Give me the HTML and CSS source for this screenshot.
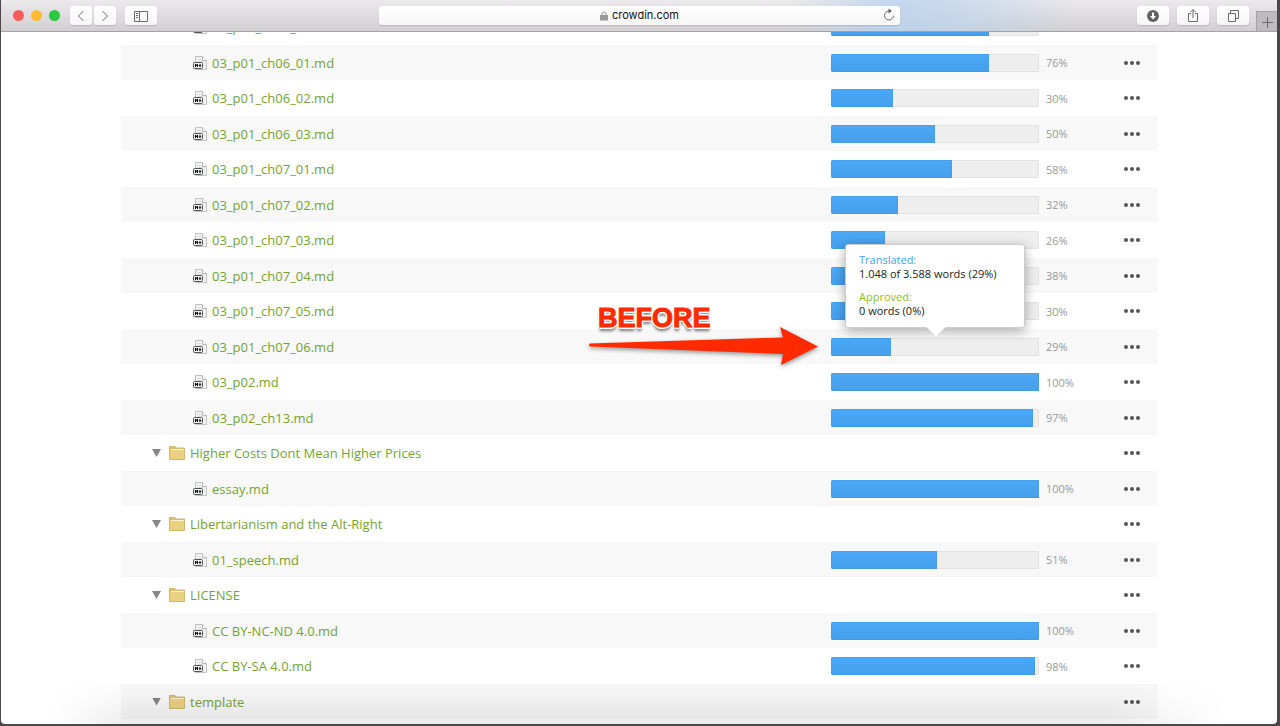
FILE: index.html
```html
<!DOCTYPE html>
<html lang="en">
<head>
<meta charset="utf-8">
<title>crowdin.com</title>
<link rel="stylesheet" href="styles.css">
</head>
<body>
<svg class="defs" aria-hidden="true">
  <symbol id="file" viewBox="0 0 14 14">
    <path d="M2.500.5h7l4 4v9h-11z" fill="#f1f2f1" stroke="#bfc3c1"/>
    <path d="M9.500.5v4h4" fill="#fff" stroke="#b5b9b7"/>
    <path d="M4 3.500h4M4 5.500h7" stroke="#dcdedd"/>
    <rect x=".5" y="6.500" width="9" height="6" rx="1" fill="#eee" stroke="#555"/>
    <path d="M2 8h1l.5 1 .5-1h1v3H4v-1H3v1H2zM6.500 8h1v1.300h1L7 11.200 5.500 9.300h1z" fill="#111"/>
  </symbol>
  <symbol id="folder" viewBox="0 0 16 14">
    <path d="M.5 13.500V.5h5.500l1 1.500h8.500v11.500z" fill="#dcc074" stroke="#d0b670"/>
    <path d="M2 3h12.500v1H2z" fill="#fff6d6"/>
    <path d="M1 4h14v9H1z" fill="#ead17f"/>
  </symbol>
</svg>
<div class="window">
  <header class="toolbar">
    <div class="lights"><i class="red"></i><i class="yellow"></i><i class="green"></i></div>
    <div class="nav">
      <button class="tool narrow" aria-label="Back"><svg width="16" height="16"><path d="M10.500 3 5.500 8l5 5"/></svg></button>
      <button class="tool narrow" aria-label="Forward"><svg width="16" height="16"><path d="m5.500 3 5 5-5 5"/></svg></button>
    </div>
    <button class="tool" aria-label="Sidebar"><svg width="16" height="16"><path d="M1.500 3.500h13v10h-13zM6.500 3.500v10M3 5.500h2M3 7.500h2M3 9.500h2"/></svg></button>
    <div class="address">
      <svg width="8" height="10"><path d="M2 5V3a2 2 0 0 1 4 0v2" class="shackle"/><path d="M0 4h8v5.500H0z" class="solid"/></svg>
      <span>crowdin.com</span>
      <button class="reload" aria-label="Reload"><svg width="12" height="14"><path d="M6 3a4.500 4.500 0 1 0 4.500 4.500"/><path d="M5.500.5 9 3 5.500 5.500z" class="dark"/></svg></button>
    </div>
    <div class="right">
      <button class="tool" aria-label="Downloads"><svg width="16" height="16"><circle cx="8" cy="8" r="6" class="dark"/><path d="M8 4.500v5" class="light"/><path d="M5 8h6l-3 3.500z" class="tip-head"/></svg></button>
      <button class="tool" aria-label="Share"><svg width="16" height="16"><path d="M6 5.500H3.500v8h9v-8H10M8 10V1.500M5.500 4 8 1.500 10.500 4"/></svg></button>
      <button class="tool" aria-label="Tabs"><svg width="16" height="16"><path d="M3.500 5.500h7v8h-7zM5.500 5.500v-3h8v8h-3"/></svg></button>
    </div>
    <button class="newtab" aria-label="New tab"><svg width="12" height="12"><path d="M6.500 1v11M1 6.500h11"/></svg></button>
  </header>
  <main class="page">
    <table class="files">
      <colgroup><col><col class="c-progress"><col class="c-percent"><col class="c-menu"></colgroup>
      <tbody id="rows"></tbody>
    </table>
    <div class="note">
      <strong>BEFORE</strong>
      <svg width="236" height="44" viewBox="0 0 236 44"><path d="M3 18.500 196 12.500 193 2 231 21.500 194 40 196 29 3 21.500Q1 20 3 18.500z"/></svg>
    </div>
  </main>
</div>
<script src="rows.js"></script>
</body>
</html>
```
FILE: rows.js
```js
const rows = [
  ["03_p01_ch05_01.md", 76], ["03_p01_ch06_01.md", 76], ["03_p01_ch06_02.md", 30],
  ["03_p01_ch06_03.md", 50], ["03_p01_ch07_01.md", 58], ["03_p01_ch07_02.md", 32],
  ["03_p01_ch07_03.md", 26], ["03_p01_ch07_04.md", 38], ["03_p01_ch07_05.md", 30],
  ["03_p01_ch07_06.md", 29], ["03_p02.md", 100], ["03_p02_ch13.md", 97],
  ["Higher Costs Dont Mean Higher Prices"], ["essay.md", 100],
  ["Libertarianism and the Alt-Right"], ["01_speech.md", 51],
  ["LICENSE"], ["CC BY-NC-ND 4.0.md", 100], ["CC BY-SA 4.0.md", 98], ["template"]
];
const tip = `<div class="tip" role="tooltip"><p><span class="translated">Translated:</span><br>1.048 of 3.588 words (29%)</p><p><span class="approved">Approved:</span><br>0 words (0%)</p></div>`;
document.getElementById("rows").innerHTML = rows.map(([name, pct]) => {
  const isFile = pct !== undefined;
  const label = isFile
    ? `<div class="entry file"><svg width="14" height="14"><use href="#file"/></svg><a href="#">${name}</a></div>`
    : `<div class="entry"><button class="toggle" aria-label="Collapse"></button><svg width="16" height="14"><use href="#folder"/></svg><a href="#">${name}</a></div>`;
  const bar = isFile ? `<div class="bar"><div class="fill" style="width:${pct}%"></div>${pct === 29 ? tip : ""}</div>` : "";
  return `<tr><td>${label}</td><td>${bar}</td><td class="percent">${isFile ? pct + "%" : ""}</td><td><button class="menu" aria-label="Actions"><i></i><i></i><i></i></button></td></tr>`;
}).join("");
```
FILE: styles.css
```css
* { box-sizing: border-box; }
body { margin: 0; background: #4b474a; font-family: "Open Sans", "Noto Sans", sans-serif; }
button { border: 0; padding: 0; background: none; }
.defs { position: absolute; width: 0; height: 0; }
.window { display: flex; flex-direction: column; height: 100vh; border: solid #4b474a; border-width: 0 3px 2px 1px; }
.toolbar { display: flex; align-items: center; flex: none; height: 32px; padding-left: 12px; border-bottom: 1px solid #a5a3a5;
  background: linear-gradient(90deg, transparent 62%, #b8d2efcc 70%, #bdd5efaa 75%, transparent 84%), linear-gradient(#ebe9eb, #d1cfd1); }
.lights { display: flex; gap: 7px; margin-right: 10px; }
.lights i { width: 11px; height: 11px; border-radius: 50%; }
.red { background: #fc5b57; }
.yellow { background: #fcbd34; }
.green { background: #29c940; }
.nav { display: flex; gap: 2px; margin-right: 9px; }
.tool { display: flex; align-items: center; justify-content: center; width: 32px; height: 19px; border-radius: 3px; background: linear-gradient(#fff, #f6f6f6); box-shadow: 0 1px 1px #0002; }
.narrow { width: 22px; }
.toolbar svg { fill: none; stroke: #6a6a6a; }
.toolbar .dark { fill: #626262; stroke: none; }
.toolbar .light { stroke: #fff; stroke-width: 2; }
.toolbar .tip-head { fill: #fff; stroke: none; }
.toolbar .solid { fill: #999; stroke: none; }
.toolbar .shackle { stroke: #999; }
.address { display: flex; align-items: center; justify-content: center; gap: 4px; flex: 1; height: 19px; margin: 0 237px 0 222px; border-radius: 3px; background: linear-gradient(#fff, #f7f7f7); box-shadow: 0 1px 1px #0002; position: relative; font: 11px/19px Inter, sans-serif; color: #111; }
.reload { position: absolute; right: 5px; top: 2px; display: flex; }
.right { display: flex; gap: 8px; margin-right: 7px; }
.newtab { display: flex; align-items: center; justify-content: center; align-self: flex-end; width: 21px; height: 20px; background: #bdbbbd; border: solid #a5a3a5; border-width: 1px 0 0 1px; }
.page { position: relative; flex: 1; min-height: 0; overflow: hidden; padding: 0 119px 0 120px; border-radius: 0 0 4px 4px; background: #fff; }
.page::after { content: ""; position: absolute; inset: auto 50px 0; height: 42px; background: linear-gradient(#0000, #00000014); mask-image: linear-gradient(90deg, #0000, #000 80px, #000 calc(100% - 120px), #0000); pointer-events: none; }
.files { width: 100%; margin-top: -23px; table-layout: fixed; border-collapse: collapse; }
.c-progress { width: 208px; }
.c-percent { width: 80px; }
.c-menu { width: 39px; }
.files td { height: 36px; padding: 0; }
.files tr:nth-child(even) { background: #f8f8f8; }
.files tr:nth-child(even) td { height: 35px; }
.entry { display: flex; align-items: center; padding-left: 31px; }
.entry.file { padding-left: 72px; }
.entry a { margin-left: 5px; font-size: 13px; line-height: 20px; color: #74a332; text-decoration: none; }
.toggle { width: 9px; height: 8px; margin-right: 8px; background: #858585; clip-path: polygon(0 0, 100% 0, 50% 100%); }
.bar { position: relative; height: 18px; border-radius: 2px; background: #eee; box-shadow: inset 0 0 0 1px #e2e2e2; }
.fill { height: 100%; border-radius: 2px 0 0 2px; background: linear-gradient(#4ba9f8, #459fec); box-shadow: inset 0 0 0 1px #3b93e066; }
.percent { font-size: 11px; color: #999; }
.files .percent { padding-left: 7px; }
.menu { display: flex; gap: 2px; margin-left: 5px; }
.menu i { width: 4px; height: 4px; border-radius: 50%; background: #555; }
.tip { position: absolute; left: 14px; bottom: 28px; width: 180px; height: 84px; padding: 8px 13px; background: #fff; border: 1px solid #ccc; border-radius: 3px; box-shadow: 0 3px 12px #0005; font-size: 11px; line-height: 14px; color: #222; z-index: 1; }
.tip::after { content: ""; position: absolute; left: 80px; top: 100%; width: 20px; height: 10px; background: #fff; clip-path: polygon(0 0, 100% 0, 50% 100%); }
.tip p { margin: 0 0 9px; }
.translated { color: #459ff0; }
.approved { color: #8dc220; }
.note { position: absolute; left: 586px; top: 269px; display: flex; flex-direction: column; }
.note strong { padding-left: 11px; font: bold 27px/34px "Liberation Sans", Arial, sans-serif; color: #ff2a00; -webkit-text-stroke: 1px #ff2a00; text-shadow: -2px 0 #fff, 2px 0 #fff, 0 -2px #fff, 0 2px #fff, 1px 1px #fff, -1px 1px #fff, 0 4px 3px #0008; }
.note svg { margin-top: -10px; fill: #ff2a00; filter: drop-shadow(0 2px 2px #0006); }
```
